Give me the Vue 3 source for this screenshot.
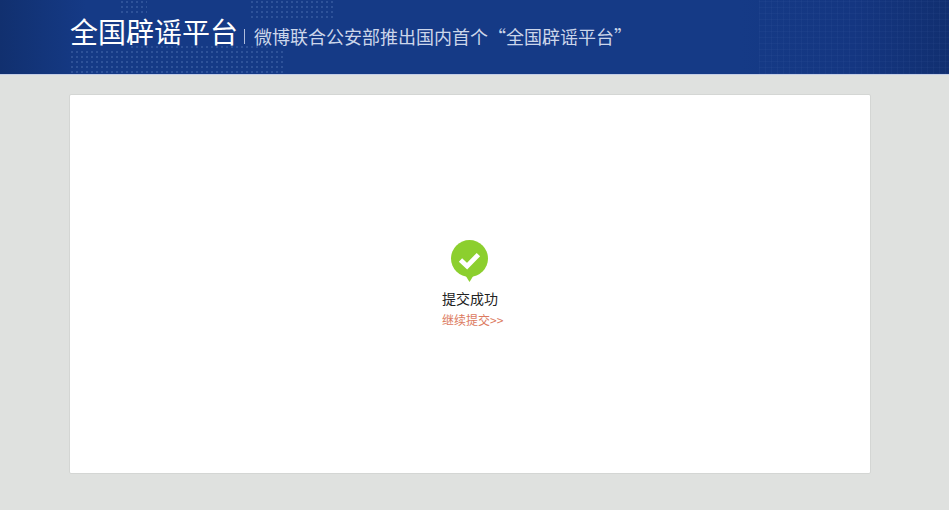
<template>
  <div class="page">
    <header class="top">
      <div class="top-inner">
        <h1 class="logo">全国辟谣平台</h1>
        <span class="divider"></span>
        <p class="slogan" lang="zh-CN">微博联合公安部推出国内首个“全国辟谣平台”</p>
      </div>
    </header>

    <main class="card">
      <div class="result">
        <svg class="ok-icon" width="37" height="42" viewBox="0 0 37 42" aria-hidden="true">
          <circle cx="18.5" cy="18.5" r="18.5" fill="#8ccf2e" />
          <path d="M14.5 35.5L18.5 42l4-6.5Z" fill="#8ccf2e" />
          <path d="M9.5 20l6.6 6.2L27.4 14.6" fill="none" stroke="#fff" stroke-width="4.8" />
        </svg>
        <p class="msg">提交成功</p>
        <a class="again" href="#">继续提交&gt;&gt;</a>
      </div>
    </main>
  </div>
</template>

<script setup>
</script>

<style>
html,
body {
  margin: 0;
  background: #dfe1df;
}
</style>

<style scoped>
.page {
  height: 510px;
  overflow: hidden;
  background: #dfe1df;
  font-family: "Noto Sans CJK SC", "Liberation Sans", sans-serif;
}

/* ─── Header ─── */
.top {
  position: relative;
  height: 75px;
  box-sizing: border-box;
  padding-left: 70px;
  border-bottom: 1px solid #c3cde6;
  background: linear-gradient(90deg, #11306f 0%, #153a86 9%, #153a86 78%, #143681 90%, #112f70 100%);
}

/* dotted world map behind the title */
.top::before {
  content: "";
  position: absolute;
  left: 70px;
  top: 0;
  width: 265px;
  height: 74px;
  background: radial-gradient(circle at 2px 2px, rgba(130, 160, 215, 0.24) 1px, transparent 1.6px) 0 0 / 5px 5px;
  -webkit-mask:
    linear-gradient(#000, #000) 0 50px / 214px 24px no-repeat,
    linear-gradient(#000, #000) 50px 0 / 27px 13px no-repeat,
    linear-gradient(#000, #000) 180px 0 / 85px 20px no-repeat,
    linear-gradient(#000, #000) 60px 43px / 140px 7px no-repeat;
  mask:
    linear-gradient(#000, #000) 0 50px / 214px 24px no-repeat,
    linear-gradient(#000, #000) 50px 0 / 27px 13px no-repeat,
    linear-gradient(#000, #000) 180px 0 / 85px 20px no-repeat,
    linear-gradient(#000, #000) 60px 43px / 140px 7px no-repeat;
}

/* faint grid on the right */
.top::after {
  content: "";
  position: absolute;
  right: 0;
  top: 0;
  width: 190px;
  height: 74px;
  background:
    repeating-linear-gradient(90deg, rgba(120, 150, 210, 0.05) 0 1px, transparent 1px 6px),
    repeating-linear-gradient(0deg, rgba(120, 150, 210, 0.05) 0 1px, transparent 1px 6px);
}

.top-inner {
  position: relative;
  z-index: 1;
  display: flex;
  align-items: center;
  height: 63px;
}

.logo {
  margin: 0;
  font-size: 28px;
  font-weight: 400;
  line-height: 63px;
  color: #fff;
}

.divider {
  width: 1px;
  height: 15px;
  margin: 9px 9px 0 6px;
  background: #aebcdc;
}

.slogan {
  margin: 9px 0 0;
  font-size: 18px;
  line-height: 24px;
  color: #ccd6ea;
  white-space: nowrap;
}

/* ─── Card ─── */
.card {
  box-sizing: border-box;
  width: 802px;
  height: 380px;
  margin: 19px 0 0 69px;
  padding: 145px 0 0 372px;
  background: #fff;
  border: 1px solid #d4d6d4;
  border-radius: 2px;
}

.result {
  display: flex;
  flex-direction: column;
  align-items: flex-start;
}

.ok-icon {
  display: block;
  margin-left: 9px;
}

.msg {
  margin: 8px 0 0;
  font-size: 14px;
  line-height: 16px;
  color: #222;
}

.again {
  margin-top: 7px;
  font-size: 12px;
  line-height: 14px;
  color: #dc7a60;
  text-decoration: none;
}
</style>
